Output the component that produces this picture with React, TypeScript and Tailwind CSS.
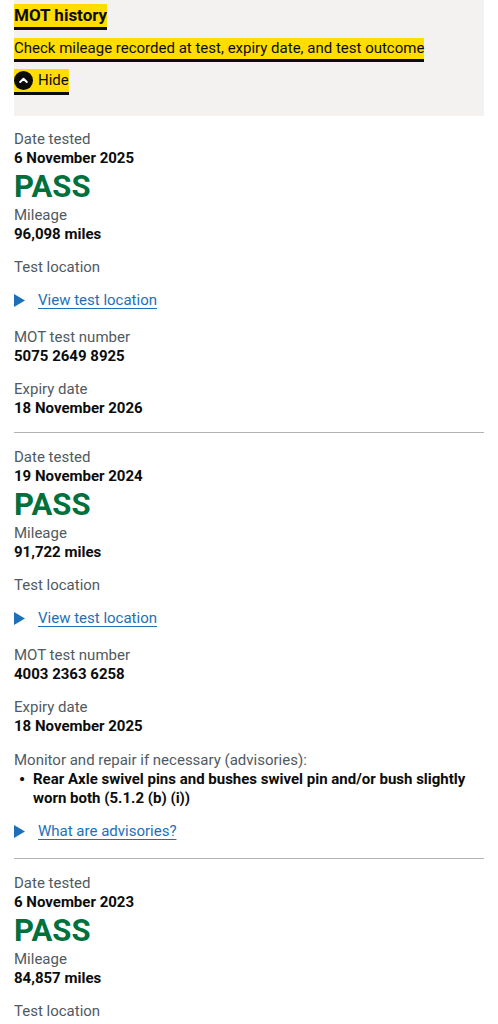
import React from "react";

type Test = {
  date: string;
  result: string;
  mileage: string;
  number: string;
  expiry: string;
  advisories?: string[];
};

const tests: Test[] = [
  {
    date: "6 November 2025",
    result: "PASS",
    mileage: "96,098 miles",
    number: "5075 2649 8925",
    expiry: "18 November 2026",
  },
  {
    date: "19 November 2024",
    result: "PASS",
    mileage: "91,722 miles",
    number: "4003 2363 6258",
    expiry: "18 November 2025",
    advisories: [
      "Rear Axle swivel pins and bushes swivel pin and/or bush slightly worn both (5.1.2 (b) (i))",
    ],
  },
  {
    date: "6 November 2023",
    result: "PASS",
    mileage: "84,857 miles",
    number: "",
    expiry: "",
  },
];

function Focused({ children, className = "" }: { children: React.ReactNode; className?: string }) {
  return (
    <span
      className={
        "inline-flex items-center bg-[#ffdd00] text-[#0b0c0c] shadow-[0_3px_0_#0b0c0c] " + className
      }
    >
      {children}
    </span>
  );
}

function Triangle() {
  return (
    <svg width="11" height="13" viewBox="0 0 11 13" className="shrink-0">
      <path d="M0 0 L11 6.5 L0 13 Z" fill="#1d70b8" />
    </svg>
  );
}

function DetailsLink({ text }: { text: string }) {
  return (
    <div className="flex items-center gap-[13px] leading-[19px]">
      <Triangle />
      <span className="text-[#1d70b8] underline underline-offset-[3px] decoration-1">{text}</span>
    </div>
  );
}

function Field({ label, value }: { label: string; value: string }) {
  return (
    <div className="leading-[19px]">
      <div className="text-[#505a5f]">{label}</div>
      <div className="font-bold text-[#0b0c0c]">{value}</div>
    </div>
  );
}

function TestRecord({ t, first, last }: { t: Test; first: boolean; last: boolean }) {
  return (
    <div
      className={
        (first ? "pt-[14px] " : "pt-[15px] ") +
        (last ? "" : "pb-[14px] border-b border-[#b1b4b6]")
      }
    >
      <div className="leading-[19px]">
        <div className="text-[#505a5f]">Date tested</div>
        <div className="font-bold text-[#0b0c0c]">{t.date}</div>
      </div>
      <div className="text-[31px] leading-[38px] font-bold text-[#00703c]">{t.result}</div>
      <Field label="Mileage" value={t.mileage} />
      <div className="mt-[14px] leading-[19px] text-[#505a5f]">Test location</div>
      {!last && (
        <>
          <div className="mt-[14px]">
            <DetailsLink text="View test location" />
          </div>
          <div className="mt-[18px]">
            <Field label="MOT test number" value={t.number} />
          </div>
          <div className="mt-[14px]">
            <Field label="Expiry date" value={t.expiry} />
          </div>
          {t.advisories && (
            <>
              <div className="mt-[15px] leading-[19px] text-[#505a5f]">
                Monitor and repair if necessary (advisories):
              </div>
              <ul className="leading-[19px] font-bold text-[#0b0c0c]">
                {t.advisories.map((a) => (
                  <li key={a} className="flex">
                    <span className="w-[19px] shrink-0 pl-[5px] text-[17px]">•</span>
                    <span>{a}</span>
                  </li>
                ))}
              </ul>
              <div className="mt-[14px] mb-[3px]">
                <DetailsLink text="What are advisories?" />
              </div>
            </>
          )}
        </>
      )}
    </div>
  );
}

export default function App() {
  return (
    <div className="min-h-screen bg-white px-[14px] text-[15px] text-[#0b0c0c] font-['Roboto',sans-serif]">
      <div className="bg-[#f3f2f1] pt-[4px] pb-[19px]">
        <div>
          <Focused className="text-[17px] font-bold leading-[23px]">MOT history</Focused>
        </div>
        <div className="mt-[9px]">
          <Focused className="text-[15px] leading-[21px]">
            Check mileage recorded at test, expiry date, and test outcome
          </Focused>
        </div>
        <div className="mt-[10px]">
          <Focused className="text-[15px] leading-[23px] gap-[5px]">
            <svg width="19" height="19" viewBox="0 0 19 19">
              <circle cx="9.5" cy="9.5" r="9.5" fill="#0b0c0c" />
              <path
                d="M6.2 11 L9.5 7.7 L12.8 11"
                fill="none"
                stroke="#fff"
                strokeWidth="2"
                strokeLinecap="round"
                strokeLinejoin="round"
              />
            </svg>
            Hide
          </Focused>
        </div>
      </div>
      {tests.map((t, i) => (
        <TestRecord key={i} t={t} first={i === 0} last={i === tests.length - 1} />
      ))}
    </div>
  );
}
